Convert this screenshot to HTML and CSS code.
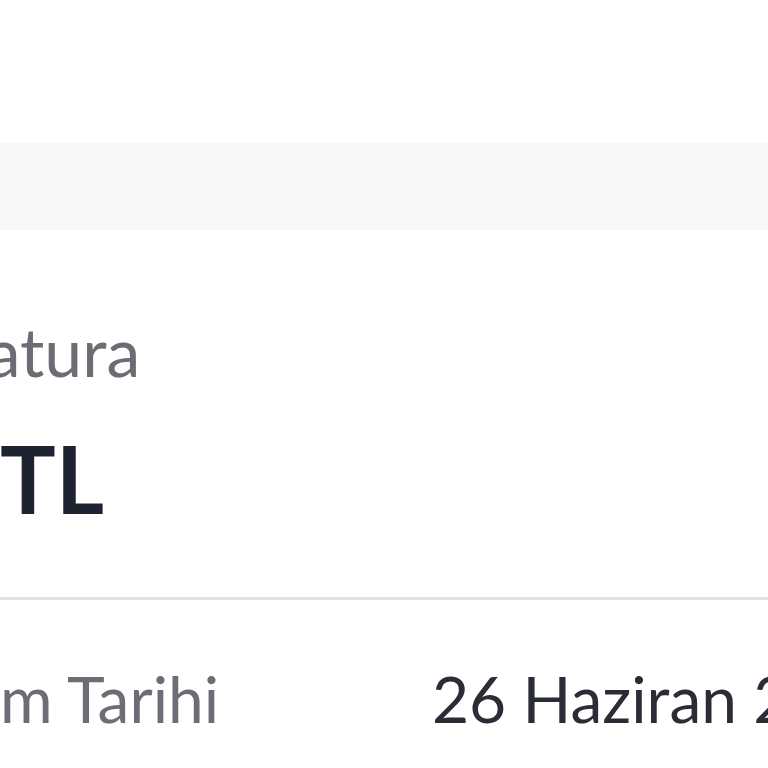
FILE: index.html
```html
<!DOCTYPE html>
<html lang="tr">
<head>
<meta charset="utf-8">
<link rel="stylesheet" href="styles.css">
</head>
<body>
<div class="page">
  <div class="top"></div>
  <div class="band"></div>
  <section class="summary">
    <div class="label">Fatura</div>
    <div class="amount">TL</div>
  </section>
  <div class="divider"></div>
  <div class="row">
    <div class="row-label">m Tarihi</div>
    <div class="row-value">26 Haziran 2024</div>
  </div>
</div>
</body>
</html>
```
FILE: styles.css
```css
html, body {
  margin: 0;
  padding: 0;
  background: #ffffff;
}
.page {
  width: 768px;
  height: 768px;
  overflow: hidden;
  font-family: Lato, "Open Sans", sans-serif;
}
.top {
  height: 143px;
}
.band {
  height: 87px;
  background: #f6f7f9;
}
.summary {
  height: 367px;
  display: flex;
  flex-direction: column;
}
.label {
  margin-top: 87px;
  margin-left: -47px;
  font-size: 68px;
  line-height: 68px;
  color: #6a6d74;
  white-space: nowrap;
}
.amount {
  margin-top: 47px;
  margin-left: 0;
  font-size: 93px;
  line-height: 93px;
  font-weight: 700;
  color: #1d2331;
  white-space: nowrap;
}
.divider {
  height: 3px;
  background: #e2e3e5;
}
.row {
  display: flex;
  padding-top: 64px;
  white-space: nowrap;
}
.row-label {
  flex: 0 0 432px;
  font-size: 64px;
  line-height: 70px;
  color: #6b6e75;
}
.row-value {
  flex: 0 0 auto;
  font-size: 64px;
  line-height: 70px;
  color: #2a2d35;
}
```
